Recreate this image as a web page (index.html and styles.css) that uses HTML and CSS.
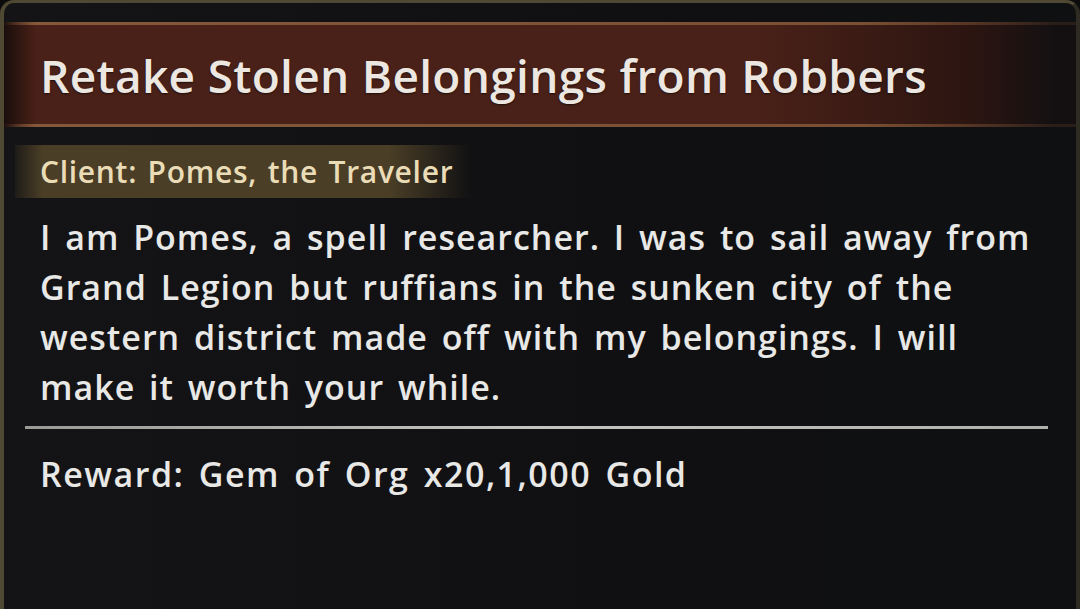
FILE: index.html
```html
<!DOCTYPE html>
<html lang="en">
<head>
    <meta charset="UTF-8">
    <meta name="viewport" content="width=device-width, initial-scale=1.0">
    <title>Quest Details</title>
    <link rel="stylesheet" href="styles.css">
</head>
<body>
    <div class="quest-panel">
        <div class="title-bar">
            <h1 class="quest-title">Retake Stolen Belongings from Robbers</h1>
        </div>

        <div class="client-bar">
            <span class="client-name">Client: Pomes, the Traveler</span>
        </div>

        <p class="quest-text">I am Pomes, a spell researcher. I was to sail away from Grand Legion but ruffians in the sunken city of the western district made off with my belongings. I will make it worth your while.</p>

        <div class="divider"></div>

        <p class="reward">Reward: Gem of Org x20,1,000 Gold</p>
    </div>
</body>
</html>
```

FILE: styles.css
```css
:root {
    --panel-bg: #121214;
    --frame-color: #4f4833;
    --title-bg: #4a2118;
    --title-line: #85583a;
    --client-bg: #4a3e26;
    --client-text: #e9dcb6;
    --text-color: #e8e8e6;
}

* {
    margin: 0;
    padding: 0;
    box-sizing: border-box;
}

body {
    font-family: "Open Sans", Lato, sans-serif;
    background-color: #0c0c0d;
    width: 1080px;
    height: 609px;
    overflow: hidden;
}

.quest-panel {
    height: 100%;
    background: linear-gradient(to right, #141315, #101012 60%, #0f1011);
    border-top: 3px solid var(--frame-color);
    border-left: 4px solid var(--frame-color);
    border-right: 4px solid #2e2b22;
    border-radius: 14px 14px 0 0;
    padding-top: 19px;
}

.title-bar {
    height: 105px;
    display: flex;
    align-items: center;
    padding-left: 36px;
    background: linear-gradient(to right, #1a0e0c 0, var(--title-bg) 3%, #4a2118 70%, #2c1511 90%, #141012 98%);
    border-top: 3px solid;
    border-bottom: 3px solid;
    border-image: linear-gradient(to right, rgba(133, 88, 58, 0), var(--title-line) 3%, #7a4f33 80%, rgba(90, 60, 40, 0.3) 98%) 1;
}

.quest-title {
    font-size: 46px;
    font-weight: 600;
    letter-spacing: 0.3px;
    color: #ede7e2;
    text-shadow: 0 1px 2px rgba(0, 0, 0, 0.6);
}

.client-bar {
    margin-top: 18px;
    margin-left: 11px;
    width: 456px;
    height: 53px;
    display: flex;
    align-items: center;
    padding-left: 25px;
    background: linear-gradient(to right, rgba(74, 62, 38, 0.2), var(--client-bg) 6%, var(--client-bg) 82%, rgba(74, 62, 38, 0));
}

.client-name {
    font-size: 30px;
    font-weight: 600;
    letter-spacing: 0.7px;
    word-spacing: 2px;
    color: var(--client-text);
}

.quest-text {
    margin-top: 14px;
    padding-left: 36px;
    padding-right: 30px;
    font-size: 34px;
    font-weight: 600;
    line-height: 50px;
    letter-spacing: 1px;
    word-spacing: 4px;
    color: var(--text-color);
}

.divider {
    margin: 14px 28px 0 21px;
    height: 3px;
    background: linear-gradient(to right, #9a9a98, #c4c4c2 50%, #b0b0ae);
}

.reward {
    margin-top: 20px;
    padding-left: 36px;
    font-size: 34px;
    font-weight: 600;
    line-height: 50px;
    letter-spacing: 1.5px;
    word-spacing: 4px;
    color: var(--text-color);
}
```
